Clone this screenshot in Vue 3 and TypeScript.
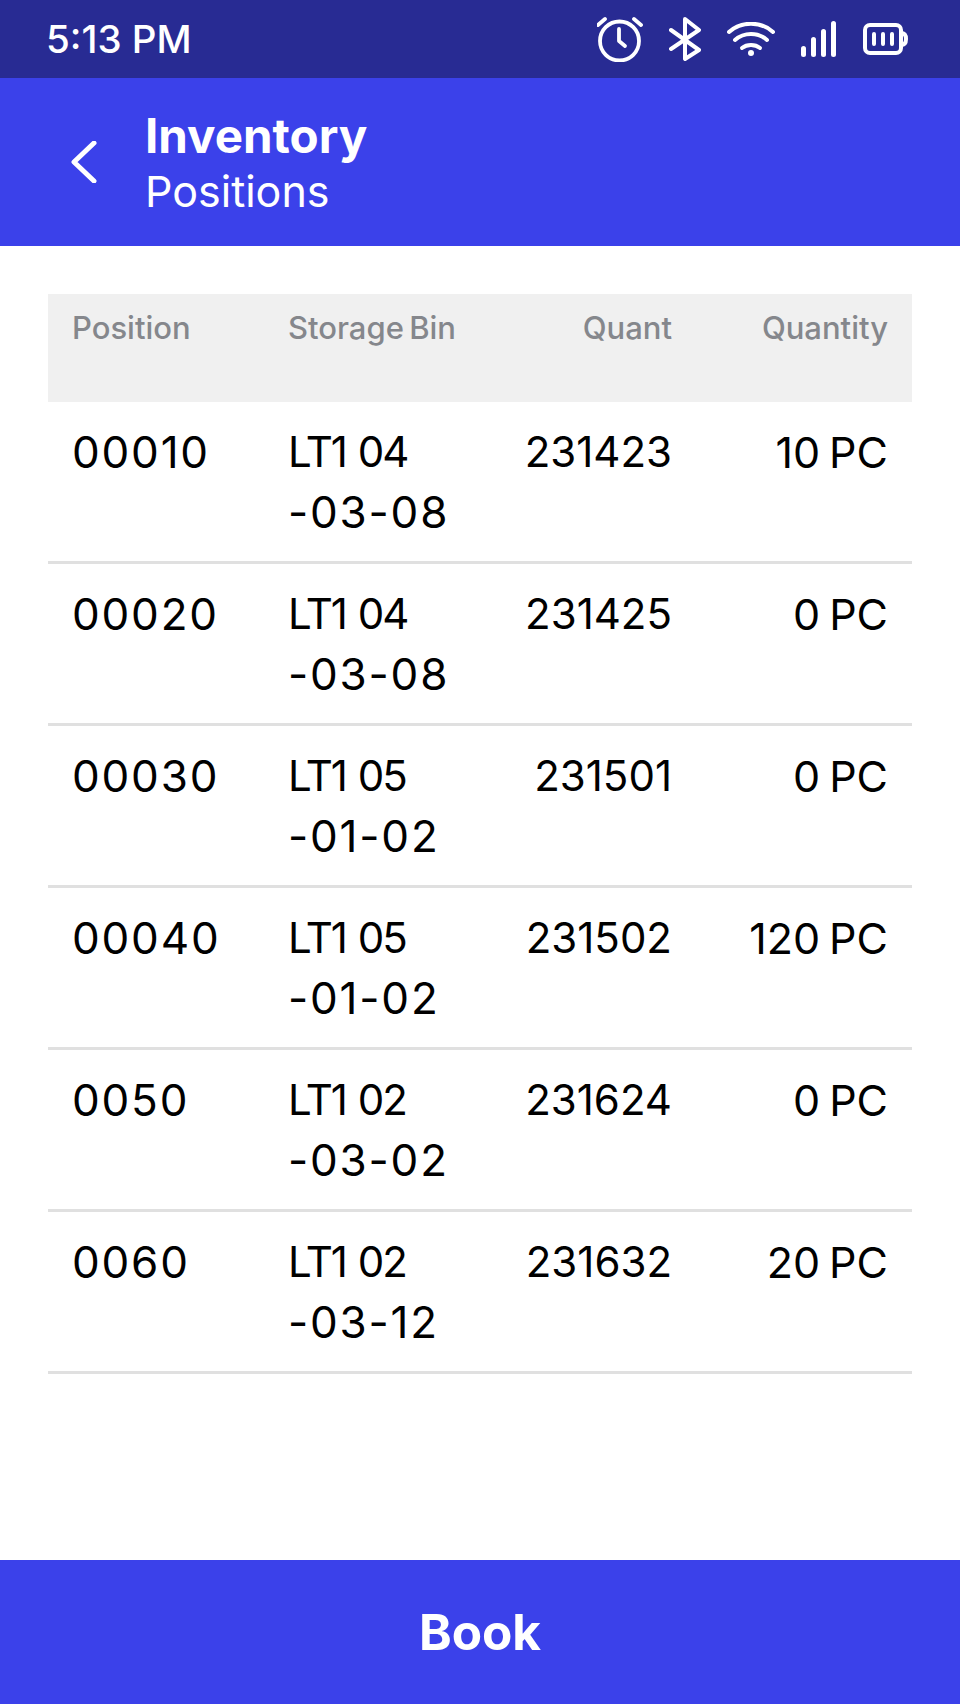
<script setup lang="ts">
interface Row {
  position: string;
  bin: [string, string];
  quant: string;
  quantity: string;
}

const rows: Row[] = [
  { position: '00010', bin: ['LT1 04', '-03-08'], quant: '231423', quantity: '10 PC' },
  { position: '00020', bin: ['LT1 04', '-03-08'], quant: '231425', quantity: '0 PC' },
  { position: '00030', bin: ['LT1 05', '-01-02'], quant: '231501', quantity: '0 PC' },
  { position: '00040', bin: ['LT1 05', '-01-02'], quant: '231502', quantity: '120 PC' },
  { position: '0050', bin: ['LT1 02', '-03-02'], quant: '231624', quantity: '0 PC' },
  { position: '0060', bin: ['LT1 02', '-03-12'], quant: '231632', quantity: '20 PC' },
];
</script>

<template>
  <div class="screen">
    <div class="status-bar">
      <span class="time">5:13 PM</span>
      <div class="status-icons">
        <svg width="46" height="46" viewBox="0 0 46 46" fill="none" stroke="#fff" stroke-width="3.8" stroke-linecap="round" stroke-linejoin="round">
          <circle cx="22.5" cy="25" r="19.5" />
          <path d="M22 13v12l6 5" />
          <path d="M1 9l7-6M37 3l7 6" />
        </svg>
        <svg width="32" height="44" viewBox="0 0 32 44" fill="none" stroke="#fff" stroke-width="4" stroke-linecap="round" stroke-linejoin="round">
          <path d="M2 13l28 20-14 9V2l14 11L2 32" />
        </svg>
        <svg width="48" height="34" viewBox="0 0 48 34" fill="none" stroke="#fff" stroke-width="4" stroke-linecap="round">
          <path d="M2 10C14-1 34-1 46 10" />
          <path d="M8 18c9-8 23-8 32 0" />
          <path d="M15 26c5-4 13-4 18 0" />
          <circle cx="24" cy="31" r="3" fill="#fff" stroke="none" />
        </svg>
        <svg width="36" height="36" viewBox="0 0 36 36" fill="#fff">
          <rect x="0" y="25" width="5" height="11" rx="2.5" />
          <rect x="10" y="16" width="5" height="20" rx="2.5" />
          <rect x="20" y="8" width="5" height="28" rx="2.5" />
          <rect x="30" y="0" width="5" height="36" rx="2.5" />
        </svg>
        <svg width="45" height="32" viewBox="0 0 45 32" fill="none" stroke="#fff" stroke-width="4" stroke-linecap="round" stroke-linejoin="round">
          <rect x="2" y="2" width="36" height="28" rx="5" />
          <path d="M38 10c4 0 5 3 5 6s-1 6-5 6" />
          <path d="M11 11v10M20 11v10M29 11v10" />
        </svg>
      </div>
    </div>

    <header class="app-bar">
      <svg class="back" width="26" height="42" viewBox="0 0 26 42" fill="none" stroke="#fff" stroke-width="5" stroke-linecap="round" stroke-linejoin="round">
        <path d="M23 2L3 21l20 19" />
      </svg>
      <div class="titles">
        <div class="title">Inventory</div>
        <div class="subtitle">Positions</div>
      </div>
    </header>

    <main class="content">
      <div class="table">
        <div class="row head">
          <div class="cell">Position</div>
          <div class="cell">Storage Bin</div>
          <div class="cell num">Quant</div>
          <div class="cell num">Quantity</div>
        </div>
        <div v-for="row in rows" :key="row.position" class="row body">
          <div class="cell zeros">{{ row.position }}</div>
          <div class="cell">
            <div class="bin-top">{{ row.bin[0] }}</div>
            <div class="zeros">{{ row.bin[1] }}</div>
          </div>
          <div class="cell num">{{ row.quant }}</div>
          <div class="cell num qty">{{ row.quantity }}</div>
        </div>
      </div>
    </main>

    <button class="book">Book</button>
  </div>
</template>

<style scoped>
.screen {
  width: 960px;
  height: 1704px;
  display: flex;
  flex-direction: column;
  background: #fff;
  font-family: Inter, 'Noto Sans', sans-serif;
}

.status-bar {
  height: 78px;
  flex: none;
  display: flex;
  align-items: center;
  justify-content: space-between;
  padding: 0 52px 0 46px;
  background: #282b93;
  color: #fff;
}

.time {
  font-size: 38.5px;
  font-weight: 500;
}

.status-icons {
  display: flex;
  align-items: center;
  gap: 26px;
}

.app-bar {
  height: 168px;
  flex: none;
  display: flex;
  align-items: center;
  padding-left: 71px;
  background: #3b41ea;
  color: #fff;
}

.back {
  margin-right: 48px;
}

.title {
  font-size: 47.5px;
  line-height: 58px;
  font-weight: 700;
}

.subtitle {
  font-size: 43px;
  line-height: 52px;
  font-weight: 400;
}

.content {
  flex: 1;
  padding: 48px 48px 0;
}

.row {
  display: grid;
  grid-template-columns: repeat(4, 1fr);
}

.cell {
  padding: 0 24px;
}

.num {
  text-align: right;
}

.head {
  height: 108px;
  padding-top: 17px;
  box-sizing: border-box;
  background: #f0f0f0;
  color: #85878c;
  font-size: 31px;
  line-height: 34px;
  font-weight: 500;
  word-spacing: -3px;
}

.body {
  height: 162px;
  box-sizing: border-box;
  padding-top: 20px;
  border-bottom: 3px solid #e0e0e0;
  color: #000;
  font-size: 42px;
  line-height: 60px;
}

.zeros {
  font-size: 44px;
  letter-spacing: 1.8px;
}

.bin-top {
  letter-spacing: -2px;
  word-spacing: 2px;
}

.qty {
  font-size: 43px;
  word-spacing: -3px;
}

.book {
  height: 144px;
  flex: none;
  border: none;
  padding: 0;
  background: #3b41ea;
  color: #fff;
  font-family: inherit;
  font-size: 49.5px;
  font-weight: 700;
}
</style>
